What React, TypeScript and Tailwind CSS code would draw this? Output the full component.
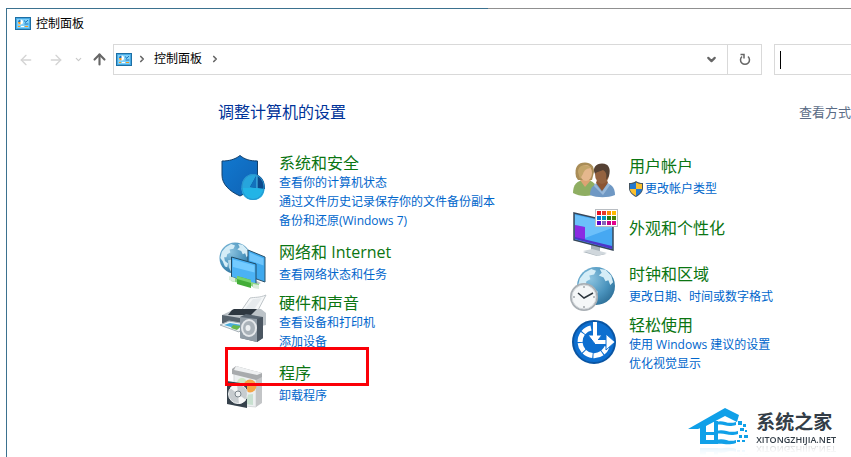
import React from 'react';
import { ArrowLeft, ArrowRight, ArrowUp, ChevronDown, ChevronRight } from 'lucide-react';

function PanelIcon() {
  return (
    <svg width="16" height="13" viewBox="0 0 16 13" className="shrink-0">
      <rect x="0.5" y="0.5" width="15" height="12" fill="#7fd0f8" stroke="#1d6fa5" />
      <rect x="1.500" y="1.500" width="13" height="10" fill="none" stroke="#48aae4" />
      <circle cx="5.500" cy="5" r="2.500" fill="#fff" />
      <path d="M5.500 5V2.500a2.500 2.500 0 0 0-2.500 2.500z" fill="#1c75bd" />
      <path d="M5.500 5h-2.500a2.500 2.500 0 0 0 2.500 2.500z" fill="#f59a23" />
      <path d="M3 9.500h2M10 9.500h3" stroke="#f59a23" />
      <path d="M6 9.500h3" stroke="#fff" />
      <path d="M9.500 3.500l1 2 2.500-2.500M9.500 7h4" stroke="#1c75bd" fill="none" />
    </svg>
  );
}

function SecurityIcon() {
  return (
    <svg width="48" height="48" viewBox="0 0 48 48" className="shrink-0">
      <defs>
        <linearGradient id="shield" x1="0" y1="0" x2="1" y2="1">
          <stop offset="0" stopColor="#1179d0" />
          <stop offset="1" stopColor="#0f62b4" />
        </linearGradient>
      </defs>
      <path d="M21 2.500c5 4 10 5.500 17.500 5.500v14c0 9-7 16-17.500 21C10 38 3 31 3 22V8C10 8 16 6.500 21 2.500z" fill="url(#shield)" stroke="#12406c" />
      <ellipse cx="34" cy="34" rx="11.500" ry="13" fill="#27a5dc" />
      <path d="M22.500 35h23c0 8-5 12-11.500 12s-11.500-4-11.500-12z" fill="#22b4e6" />
      <path d="M38 21.500L31 34l15 2c0-8-3-12-8-14.500z" fill="#0c4a8c" />
      <path d="M38 21.500L31 34l7 1z" fill="#1272bd" />
      <path d="M38 22v13" stroke="#4fc5f0" />
      <ellipse cx="34" cy="34" rx="11" ry="12.500" fill="none" stroke="#2a93cc" />
    </svg>
  );
}

function Globe({ id, cx, cy, r }: { id: string; cx: number; cy: number; r: number }) {
  return (
    <g>
      <defs>
        <radialGradient id={id} cx="0.35" cy="0.3" r="0.8">
          <stop offset="0" stopColor="#8dc4e0" />
          <stop offset="0.6" stopColor="#4a93bd" />
          <stop offset="1" stopColor="#2b6c94" />
        </radialGradient>
      </defs>
      <g transform={`translate(${cx} ${cy}) scale(${r / 20})`}>
        <circle r="20" fill={`url(#${id})`} />
        <path d="M-17-8l5-6 7-4 5 2-2 4-5 1 1 4-4 2-1 4-3 0 1 5 4 3-1 5-3-1-3-7-3-4z" fill="#d5edf7" />
        <path d="M4-18l6 1 6 6 2 7-3 3-2-5-3 1-2-4-5-2 3-3z" fill="#d5edf7" />
        <path d="M-9 3l6-1 5 4-3 7-4 5-3-6z" fill="#b5d8e8" />
      </g>
    </g>
  );
}

function NetworkIcon() {
  return (
    <svg width="48" height="48" viewBox="0 0 48 48" className="shrink-0">
      <Globe id="netGlobe" cx={16} cy={16} r={15.500} />
      <path d="M29 8l17 7v25l-17-6z" fill="#3fa9ee" stroke="#2b5068" />
      <path d="M30.500 10.500l14 6v7l-14-5z" fill="#6fc5fb" />
      <path d="M30 42l8-3 4 2-8 4z" fill="#b9c3c9" />
      <path d="M12.500 15L37 22v21l-24.500-8z" fill="#4bb2f5" stroke="#1f4964" />
      <path d="M14 17.500l21.500 6v7L14 25z" fill="#74cbff" />
      <path d="M12 35l28 7v4l-28-7z" fill="#8fd784" />
      <path d="M18 34l14 4v8l-14-4z" fill="#43ad38" />
      <path d="M18 34l14 4v3l-14-4z" fill="#78d36c" />
      <path d="M10 34l6 2v4l-6-2zM34 42l6 1v4l-6-1z" fill="#dceddb" />
    </svg>
  );
}

function HardwareIcon() {
  return (
    <svg width="50" height="50" viewBox="0 0 50 50" className="-mr-0.5 shrink-0">
      <path d="M22 18L31 5c5-1 9 0 16-3L37 21z" fill="#f5f7f8" stroke="#bfc5c9" />
      <path d="M25 17l9-11 9-1-9 13z" fill="#e6eaed" />
      <path d="M3 22l13-6h26l5 4v12l-18 4L3 31z" fill="#bcc3c8" />
      <path d="M13 17l2-1h23l-6 6H9z" fill="#2d3740" />
      <path d="M3 22l24 4v8L3 30z" fill="#56626c" />
      <path d="M1 32l9-4 17 3-7 8z" fill="#eef3f5" stroke="#a5afb5" />
      <path d="M5 32l6-2 12 2-4 4z" fill="#4caedb" />
      <path d="M14 32l8 1-4 4-6-2z" fill="#68b84b" />
      <path d="M21 24l6-3 17 3v21l-6 4-17-4z" fill="#596672" />
      <path d="M21 24l17 2v23l-17-4z" fill="#919ca6" />
      <path d="M38 26l6-2v21l-6 4z" fill="#4b5661" />
      <ellipse cx="30" cy="35" rx="8" ry="9" fill="#e5e8eb" />
      <ellipse cx="30" cy="35" rx="6" ry="7" fill="#aab2b9" />
      <ellipse cx="29" cy="35" rx="2.500" ry="3" fill="#edf0f2" />
    </svg>
  );
}

function ProgramsIcon() {
  return (
    <svg width="48" height="48" viewBox="0 0 48 48" className="shrink-0">
      <path d="M15 7l22 6v31l-22-2z" fill="#eceff0" stroke="#d6d9db" />
      <path d="M37 13l6-3v30l-6 4z" fill="#c3c5c7" />
      <path d="M13 6l4-3 26 7v4l-6 3-24-6z" fill="#a8abad" />
      <path d="M17 3l26 7-5 2-23-5z" fill="#eef0f1" />
      <circle cx="23" cy="20" r="5" fill="#cfe6c4" />
      <circle cx="31" cy="23" r="6.500" fill="#f4a648" />
      <path d="M25 32l9-1v11l-9-1z" fill="#c8e0d0" />
      <path d="M8 18l20 3v24L8 41z" fill="#36424c" />
      <circle cx="19" cy="31" r="9.500" fill="#c7cccf" stroke="#edf0f1" />
      <path d="M19 31L11 25a10 10 0 0 1 7-4zM19 31l8 6a10 10 0 0 1-7 4z" fill="#f7f8f8" />
      <circle cx="19" cy="31" r="3" fill="#eef1f2" stroke="#7b858b" />
    </svg>
  );
}

function UsersIcon() {
  return (
    <svg width="48" height="48" viewBox="0 0 48 48" className="shrink-0">
      <path d="M4 37c0-8 4-13 12-13s12 4 12 13c-7 4-17 4-24 0z" fill="#8fae62" />
      <path d="M11 24l5 7 6-7-2-5h-7z" fill="#dda373" />
      <path d="M7 21C5 11 9 6.500 16 6.500c6 0 9 3.500 9 9.500l-2 8H9z" fill="#a98d57" />
      <ellipse cx="17" cy="17" rx="6" ry="8" fill="#e5b78d" />
      <path d="M9 16c0-7 7-9 14-4-5 0-8 2-9 6l-3 5z" fill="#c3a56a" />
      <path d="M21 39c0-9 5-12 13-12s12 4 12 12c-7 3-18 3-25 0z" fill="#6f98c4" />
      <path d="M27 27l6 8 6-8-2-6h-8z" fill="#8c5534" />
      <ellipse cx="33" cy="18" rx="7" ry="10" fill="#94623f" />
      <path d="M26 18c-3-6 1-10.500 7-10.500 7 0 9 5.500 7 12.500l-3 4c1-6 0-8-3-10-3 2-6 1-8 4z" fill="#554133" />
      <path d="M26 27l7 9 6-9 2 2-7 10-9-9z" fill="#98b8d9" />
    </svg>
  );
}

const swatches = [
  '#e81123', '#e8392b', '#ff8c00', '#ffb900',
  '#0078d7', '#0099bc', '#2d7d1a', '#498205',
  '#5c00c7', '#8764b8', '#c30088', '#e3008c',
];

function AppearanceIcon() {
  return (
    <svg width="50" height="48" viewBox="0 0 50 48" className="-mr-0.5 shrink-0">
      <path d="M22 35l9 3v5l6 2-9 2-14-4 8-1z" fill="#a7b2ba" />
      <path d="M14 42l9-2 15 4-9 3z" fill="#d0d7dc" />
      <path d="M5 4l39 9v28L5 31z" fill="#46a8f2" stroke="#37475a" strokeWidth="1.500" />
      <path d="M6 6l37 8v5L16 29V18L6 16z" fill="#6cc0fa" />
      <path d="M6 16l10 2v14L6 29z" fill="#8a2be2" />
      <path d="M6 28l37 9v3L6 30z" fill="#4d36c9" />
      <rect x="26.500" y="0.500" width="22" height="17" fill="#fff" stroke="#b8bdc2" />
      {swatches.map((fill, i) => (
        <rect key={i} x={28 + (i % 4) * 5} y={2 + Math.floor(i / 4) * 5} width="4" height="4" fill={fill} />
      ))}
    </svg>
  );
}

function ClockIcon() {
  return (
    <svg width="48" height="48" viewBox="0 0 48 48" className="shrink-0">
      <Globe id="clockGlobe" cx={27} cy={22} r={19} />
      <circle cx="15" cy="33" r="14" fill="#a9afb4" />
      <circle cx="15" cy="33" r="12" fill="#f5f7f8" stroke="#d5d9dc" />
      <path d="M9 29l6 5 9-5" fill="none" stroke="#2d363d" strokeWidth="1.500" />
      <path d="M15 22v2M15 42v2M4 33h2M24 33h2" stroke="#7a8187" />
    </svg>
  );
}

function EaseIcon() {
  return (
    <svg width="48" height="50" viewBox="0 0 48 50" className="shrink-0">
      <circle cx="25" cy="27" r="21" fill="#0d6fd0" stroke="#0a55a3" strokeWidth="2" />
      <path d="M22 13A14 14 0 1 0 38 32" fill="none" stroke="#fff" strokeWidth="5" strokeDasharray="9 1" />
      <path d="M26 7v20M26 27h14" stroke="#fff" strokeWidth="4" />
      <path d="M19 20h14l-7 9z" fill="#fff" stroke="#0d6fd0" />
      <path d="M24 7h4v16h-4zM26 25h12v4H26z" fill="#fff" />
      <path d="M37 19l9 8-9 8z" fill="#fff" stroke="#0d6fd0" />
    </svg>
  );
}

function UacShield() {
  return (
    <svg width="14" height="16" viewBox="0 0 14 16" className="shrink-0">
      <path d="M7 0c2 1.500 4 2 7 2v5c0 4-3 7-7 9-4-2-7-5-7-9V2c3 0 5-.5 7-2z" fill="#43535f" />
      <path d="M7 1.500V8H1V3c2 0 4-.5 6-1.500zM7 8h6c0 3-3 5-6 7z" fill="#2378cf" />
      <path d="M7 1.500V8h6V3c-2 0-4-.5-6-1.500zM7 8H1c0 3 3 5 6 7z" fill="#fcc02e" />
    </svg>
  );
}

interface CategoryProps {
  icon: React.ReactNode;
  title: string;
  links?: string[];
  shield?: boolean;
  className?: string;
  children?: React.ReactNode;
}

function Category({ icon, title, links = [], shield, className = '', children }: CategoryProps) {
  return (
    <section className={`relative flex items-start gap-3 ${className}`}>
      {icon}
      <div className={`min-w-0 whitespace-nowrap ${links.length === 0 ? 'pt-[9px]' : ''}`}>
        <h2 className="text-[16px] leading-5">
          <a href="#" className="text-[#0b7512]">{title}</a>
        </h2>
        {links.length > 0 && (
          <ul className={links.length === 1 ? 'pt-[3px]' : ''}>
            {links.map((link) => (
              <li key={link} className="flex items-center gap-0.5 text-[12px] leading-[19px]">
                {shield && <UacShield />}
                <a href="#" className="text-[#0066cc]">{link}</a>
              </li>
            ))}
          </ul>
        )}
      </div>
      {children}
    </section>
  );
}

function Toolbar() {
  return (
    <div className="flex h-[31px] items-stretch text-[#666]">
      <nav className="flex w-[106px] shrink-0 items-center pl-[11px]">
        <button type="button" aria-label="后退" className="text-[#d4d4d4]"><ArrowLeft size={16} /></button>
        <button type="button" aria-label="前进" className="ml-3.5 text-[#d4d4d4]"><ArrowRight size={16} /></button>
        <button type="button" aria-label="最近" className="ml-2.5 text-[#c8c8c8]"><ChevronDown size={9} strokeWidth={3} /></button>
        <button type="button" aria-label="向上" className="ml-2"><ArrowUp size={17} strokeWidth={3} /></button>
      </nav>
      <div className="flex flex-1 items-stretch border border-[#d9d9d9]">
        <div className="flex flex-1 items-center pb-px pl-0.5">
          <PanelIcon />
          <ChevronRight size={10} strokeWidth={4} className="ml-[5px]" />
          <button type="button" className="ml-[7px] text-[12px] leading-5 text-black">控制面板</button>
          <ChevronRight size={10} strokeWidth={4} className="ml-2" />
        </div>
        <button type="button" aria-label="历史" className="flex w-8 items-center justify-center"><ChevronDown size={13} strokeWidth={4} /></button>
        <button type="button" aria-label="刷新" className="flex w-[34px] items-center justify-center border-l border-[#d9d9d9]">
          <svg width="12" height="13" viewBox="0 0 12 13" fill="none" stroke="#666" strokeWidth="1.500">
            <path d="M9 3.500A4.500 4.500 0 1 1 3 3.500" />
            <path d="M1.500 1.500H5v4" />
          </svg>
        </button>
      </div>
      <label className="ml-3 flex w-[77px] shrink-0 items-center border border-r-0 border-[#d9d9d9] pl-[5px]">
        <span className="h-[18px] w-px shrink-0 bg-black" />
        <input type="text" aria-label="搜索控制面板" className="w-full min-w-0 outline-none" />
      </label>
    </div>
  );
}

function SiteLogo() {
  return (
    <div className="absolute right-[15px] bottom-[11px] flex items-end gap-[7px]">
      <svg width="61" height="38" viewBox="0 0 61 38" fill="#10a0e8" className="[-webkit-box-reflect:below_0px_linear-gradient(transparent_75%,rgba(0,0,0,0.12))]">
        <path d="M0 21L37 0l14 7-2 7-12-6-19 10-8 3z" />
        <path d="M12 18l6-3v20h-6z" />
        <path d="M12 24h16v3H12zM12 32h16v4H12zM26 13h4v23h-4z" />
        <path d="M28 14c8-3 10 3 20 0v3c-10 3-12-2-20 0zM28 23c9-3 12 3 22 0v3c-10 3-13-2-22 0zM28 32c9-3 12 3 20 0v3c-9 3-12 0-20 1z" />
        <path d="M50 13h4v4h-4zM55 16h3v3h-3zM52 20h4v3h-4zM57 22h2v2h-2zM51 27h3v3h-3zM56 27h4v3h-4zM49 32h3v2h-3zM54 32h3v2h-3z" />
      </svg>
      <div>
        <p className="text-[19px] font-bold leading-6 text-[#333d47]">系统之家</p>
        <p className="text-[9px] font-semibold leading-3 text-[#333d47] [-webkit-box-reflect:below_-3px_linear-gradient(transparent_15%,rgba(0,0,0,0.25))]">XITONGZHIJIA.NET</p>
      </div>
    </div>
  );
}

export default function App() {
  return (
    <div className="h-screen overflow-hidden bg-white pt-2 pl-1.5 font-['Open_Sans','Noto_Sans_CJK_SC',sans-serif]">
      <div className="relative h-full border-l border-[#3b718f]">
        <div className="h-px bg-linear-to-r from-[#3b718f] from-57% to-[#909090] to-57%" />
        <header className="flex h-[35px] items-center gap-[5px] pb-1.5 pl-2">
          <PanelIcon />
          <h1 className="text-[12px] leading-5 text-black">控制面板</h1>
        </header>
        <Toolbar />
        <main className="pl-[212px]">
          <div className="flex items-center justify-between pt-[27px]">
            <h2 className="-ml-px text-[16px] leading-5 text-[#003399]">调整计算机的设置</h2>
            <span className="text-[13px] leading-5 text-[#5a6b85]">查看方式</span>
          </div>
          <div className="flex pt-[31px]">
            <div className="w-[350px] shrink-0">
              <Category icon={<SecurityIcon />} title="系统和安全" links={['查看你的计算机状态', '通过文件历史记录保存你的文件备份副本', '备份和还原(Windows 7)']} />
              <Category icon={<NetworkIcon />} title="网络和 Internet" links={['查看网络状态和任务']} className="mt-3" />
              <Category icon={<HardwareIcon />} title="硬件和声音" links={['查看设备和打印机', '添加设备']} className="mt-[3px]" />
              <Category icon={<ProgramsIcon />} title="程序" links={['卸载程序']} className="mt-3">
                <div className="absolute -top-4 left-1.5 h-[39px] w-36 border-3 border-[#fb0007]" />
              </Category>
            </div>
            <div className="pt-[3px]">
              <Category icon={<UsersIcon />} title="用户帐户" links={['更改帐户类型']} shield />
              <Category icon={<AppearanceIcon />} title="外观和个性化" className="mt-[5px]" />
              <Category icon={<ClockIcon />} title="时钟和区域" links={['更改日期、时间或数字格式']} className="mt-[7px]" />
              <Category icon={<EaseIcon />} title="轻松使用" links={['使用 Windows 建议的设置', '优化视觉显示']} className="mt-[3px]" />
            </div>
          </div>
        </main>
        <SiteLogo />
      </div>
    </div>
  );
}
